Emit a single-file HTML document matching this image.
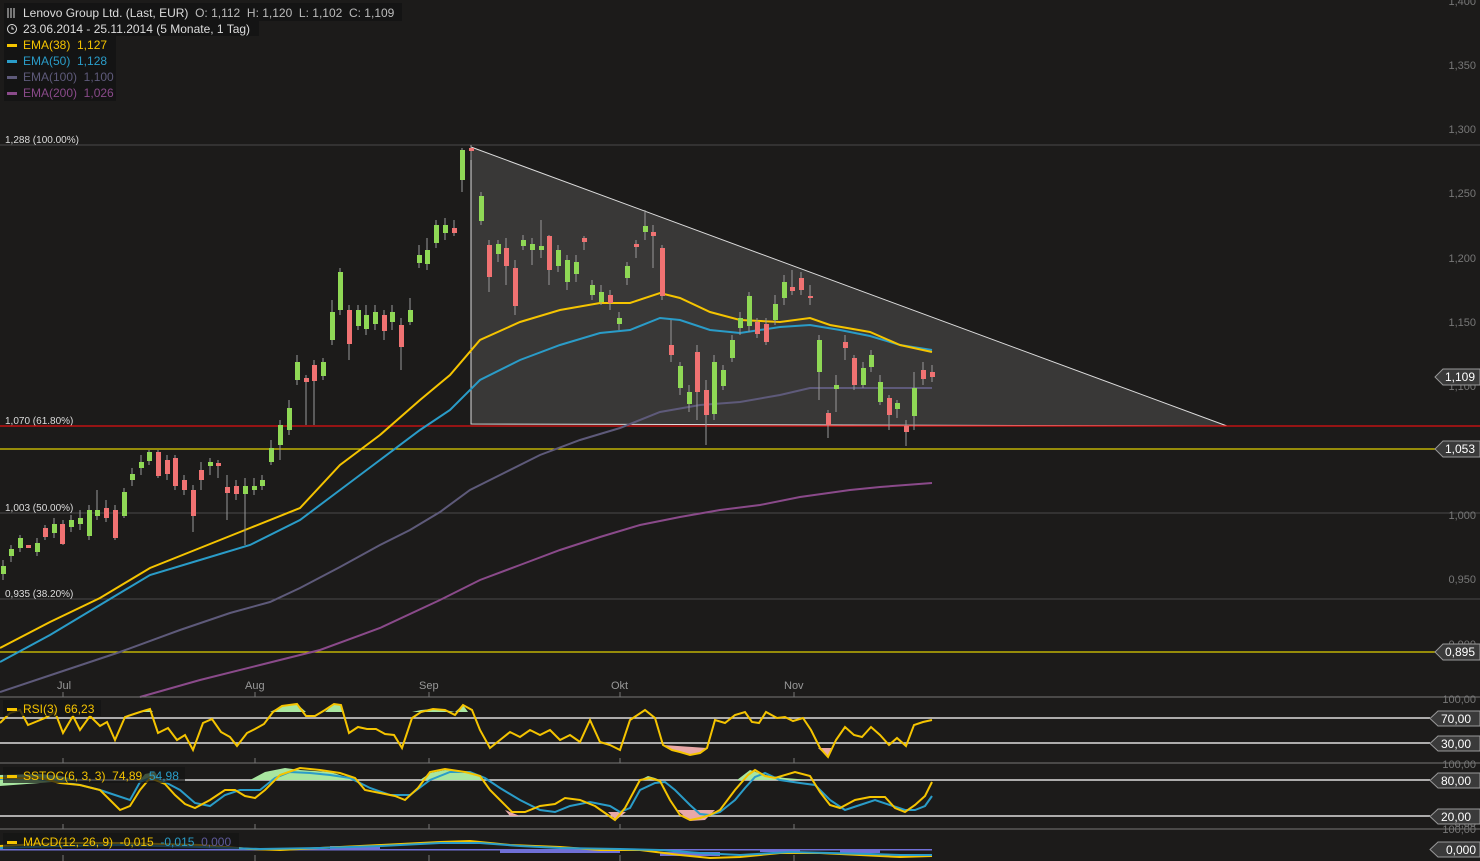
<!DOCTYPE html>
<html><head><meta charset="utf-8"><style>
body{margin:0;background:#1c1b1a;width:1480px;height:861px;overflow:hidden;font-family:"Liberation Sans",sans-serif}
svg{display:block}
text{font-family:"Liberation Sans",sans-serif;white-space:pre}
</style></head><body>
<svg width="1480" height="861" viewBox="0 0 1480 861" xml:space="preserve">
<rect width="1480" height="861" fill="#1c1b1a"/>
<line x1="0" y1="145" x2="1480" y2="145" stroke="#4a4a4a"/>
<line x1="0" y1="513" x2="1480" y2="513" stroke="#4a4a4a"/>
<line x1="0" y1="599" x2="1480" y2="599" stroke="#4a4a4a"/>
<text x="5" y="143" fill="#ddd" font-size="10">1,288 (100.00%)</text>
<text x="5" y="424" fill="#ddd" font-size="10">1,070 (61.80%)</text>
<text x="5" y="511" fill="#ddd" font-size="10">1,003 (50.00%)</text>
<text x="5" y="597" fill="#ddd" font-size="10">0,935 (38.20%)</text>
<polygon points="471,147 1227,426 471,424" fill="rgba(255,255,255,0.13)" stroke="#ddd" stroke-width="1"/>
<line x1="0" y1="426" x2="1480" y2="426" stroke="#e01010" stroke-width="1.3"/>
<line x1="0" y1="449" x2="1480" y2="449" stroke="#e0d000" stroke-width="1.2"/>
<line x1="0" y1="652" x2="1480" y2="652" stroke="#e0d000" stroke-width="1.2"/>
<polyline fill="none" stroke="#8a4a8a" stroke-width="2" points="140,697 200,680 260,665 320,650 380,628 440,600 480,580 520,565 560,550 600,537 640,525 680,517 720,510 760,505 800,497 850,490 880,487 932,483"/>
<polyline fill="none" stroke="#5e5a7a" stroke-width="2" points="0,692 60,672 120,652 180,630 230,613 270,602 300,588 340,567 380,545 410,530 440,512 470,490 500,475 540,455 580,440 620,428 660,412 700,405 740,402 780,395 810,388 850,388 900,388 932,388"/>
<polyline fill="none" stroke="#2a9cc8" stroke-width="2" points="0,662 50,635 100,605 150,575 200,560 250,545 300,520 340,490 380,460 420,430 450,410 480,380 520,360 560,345 600,333 630,330 660,318 680,320 710,330 740,333 780,327 810,325 840,330 870,336 900,345 932,350"/>
<polyline fill="none" stroke="#f5c400" stroke-width="2" points="0,648 50,622 100,598 150,568 200,548 250,528 300,508 340,465 380,435 420,400 450,375 480,340 520,322 560,310 600,303 630,303 660,293 680,298 710,312 740,320 780,322 810,318 830,325 870,332 900,345 932,352"/>
<g stroke="#999" stroke-width="1">
<line x1="3" y1="560" x2="3" y2="580"/><line x1="11" y1="545" x2="11" y2="562"/><line x1="20" y1="535" x2="20" y2="552"/><line x1="37" y1="538" x2="37" y2="556"/><line x1="45" y1="525" x2="45" y2="540"/><line x1="54" y1="518" x2="54" y2="538"/><line x1="63" y1="520" x2="63" y2="545"/><line x1="71" y1="515" x2="71" y2="532"/><line x1="80" y1="510" x2="80" y2="530"/><line x1="89" y1="505" x2="89" y2="540"/><line x1="97" y1="490" x2="97" y2="520"/><line x1="106" y1="500" x2="106" y2="522"/><line x1="115" y1="505" x2="115" y2="540"/><line x1="124" y1="488" x2="124" y2="518"/><line x1="132" y1="468" x2="132" y2="486"/><line x1="141" y1="455" x2="141" y2="475"/><line x1="149" y1="450" x2="149" y2="465"/><line x1="158" y1="450" x2="158" y2="478"/><line x1="167" y1="455" x2="167" y2="480"/><line x1="175" y1="455" x2="175" y2="490"/><line x1="184" y1="475" x2="184" y2="495"/><line x1="193" y1="485" x2="193" y2="532"/><line x1="201" y1="462" x2="201" y2="490"/><line x1="210" y1="458" x2="210" y2="475"/><line x1="218" y1="460" x2="218" y2="478"/><line x1="227" y1="475" x2="227" y2="520"/><line x1="236" y1="480" x2="236" y2="500"/><line x1="245" y1="478" x2="245" y2="545"/><line x1="254" y1="478" x2="254" y2="495"/><line x1="262" y1="475" x2="262" y2="490"/><line x1="271" y1="440" x2="271" y2="465"/><line x1="280" y1="420" x2="280" y2="460"/><line x1="289" y1="400" x2="289" y2="435"/><line x1="297" y1="355" x2="297" y2="385"/><line x1="306" y1="375" x2="306" y2="425"/><line x1="314" y1="360" x2="314" y2="425"/><line x1="323" y1="358" x2="323" y2="380"/><line x1="332" y1="300" x2="332" y2="345"/><line x1="340" y1="268" x2="340" y2="315"/><line x1="349" y1="305" x2="349" y2="360"/><line x1="358" y1="305" x2="358" y2="330"/><line x1="366" y1="305" x2="366" y2="335"/><line x1="375" y1="305" x2="375" y2="330"/><line x1="384" y1="310" x2="384" y2="340"/><line x1="392" y1="305" x2="392" y2="330"/><line x1="401" y1="318" x2="401" y2="370"/><line x1="410" y1="298" x2="410" y2="325"/><line x1="419" y1="245" x2="419" y2="268"/><line x1="427" y1="238" x2="427" y2="270"/><line x1="436" y1="220" x2="436" y2="248"/><line x1="445" y1="218" x2="445" y2="240"/><line x1="454" y1="220" x2="454" y2="236"/><line x1="462" y1="148" x2="462" y2="192"/><line x1="471" y1="145" x2="471" y2="160"/><line x1="481" y1="192" x2="481" y2="225"/><line x1="489" y1="240" x2="489" y2="292"/><line x1="498" y1="240" x2="498" y2="262"/><line x1="506" y1="238" x2="506" y2="285"/><line x1="515" y1="260" x2="515" y2="315"/><line x1="523" y1="235" x2="523" y2="250"/><line x1="532" y1="238" x2="532" y2="265"/><line x1="541" y1="220" x2="541" y2="258"/><line x1="549" y1="235" x2="549" y2="285"/><line x1="558" y1="245" x2="558" y2="272"/><line x1="567" y1="255" x2="567" y2="290"/><line x1="576" y1="255" x2="576" y2="282"/><line x1="584" y1="236" x2="584" y2="250"/><line x1="592" y1="280" x2="592" y2="300"/><line x1="601" y1="285" x2="601" y2="305"/><line x1="610" y1="290" x2="610" y2="310"/><line x1="619" y1="312" x2="619" y2="330"/><line x1="627" y1="262" x2="627" y2="285"/><line x1="636" y1="240" x2="636" y2="258"/><line x1="645" y1="210" x2="645" y2="240"/><line x1="653" y1="225" x2="653" y2="268"/><line x1="662" y1="245" x2="662" y2="300"/><line x1="671" y1="320" x2="671" y2="362"/><line x1="680" y1="362" x2="680" y2="395"/><line x1="689" y1="385" x2="689" y2="412"/><line x1="697" y1="345" x2="697" y2="420"/><line x1="706" y1="380" x2="706" y2="445"/><line x1="714" y1="355" x2="714" y2="420"/><line x1="723" y1="365" x2="723" y2="390"/><line x1="732" y1="335" x2="732" y2="362"/><line x1="740" y1="312" x2="740" y2="335"/><line x1="749" y1="292" x2="749" y2="332"/><line x1="757" y1="318" x2="757" y2="338"/><line x1="766" y1="318" x2="766" y2="345"/><line x1="775" y1="295" x2="775" y2="325"/><line x1="784" y1="275" x2="784" y2="305"/><line x1="792" y1="270" x2="792" y2="295"/><line x1="801" y1="272" x2="801" y2="295"/><line x1="810" y1="285" x2="810" y2="305"/><line x1="819" y1="335" x2="819" y2="400"/><line x1="828" y1="410" x2="828" y2="438"/><line x1="836" y1="375" x2="836" y2="412"/><line x1="845" y1="335" x2="845" y2="360"/><line x1="854" y1="355" x2="854" y2="390"/><line x1="863" y1="362" x2="863" y2="388"/><line x1="871" y1="350" x2="871" y2="372"/><line x1="880" y1="375" x2="880" y2="405"/><line x1="889" y1="395" x2="889" y2="430"/><line x1="897" y1="400" x2="897" y2="418"/><line x1="906" y1="420" x2="906" y2="446"/><line x1="914" y1="372" x2="914" y2="430"/><line x1="923" y1="362" x2="923" y2="385"/><line x1="932" y1="365" x2="932" y2="382"/>
</g>
<g fill="#8fd855">
<rect x="1" y="566" width="5" height="8"/><rect x="9" y="549" width="5" height="7"/><rect x="18" y="538" width="5" height="10"/><rect x="35" y="543" width="5" height="9"/><rect x="52" y="524" width="5" height="9"/><rect x="69" y="520" width="5" height="7"/><rect x="78" y="518" width="5" height="6"/><rect x="87" y="510" width="5" height="26"/><rect x="95" y="510" width="5" height="6"/><rect x="122" y="492" width="5" height="24"/><rect x="130" y="474" width="5" height="6"/><rect x="139" y="462" width="5" height="6"/><rect x="147" y="452" width="5" height="9"/><rect x="208" y="462" width="5" height="4"/><rect x="243" y="486" width="5" height="8"/><rect x="252" y="486" width="5" height="4"/><rect x="260" y="480" width="5" height="6"/><rect x="269" y="448" width="5" height="14"/><rect x="278" y="425" width="5" height="20"/><rect x="287" y="408" width="5" height="22"/><rect x="295" y="362" width="5" height="18"/><rect x="321" y="362" width="5" height="14"/><rect x="330" y="312" width="5" height="28"/><rect x="338" y="272" width="5" height="38"/><rect x="356" y="310" width="5" height="16"/><rect x="364" y="315" width="5" height="14"/><rect x="373" y="312" width="5" height="12"/><rect x="390" y="312" width="5" height="10"/><rect x="408" y="310" width="5" height="12"/><rect x="417" y="255" width="5" height="8"/><rect x="425" y="250" width="5" height="14"/><rect x="434" y="225" width="5" height="18"/><rect x="443" y="225" width="5" height="8"/><rect x="460" y="150" width="5" height="30"/><rect x="479" y="196" width="5" height="25"/><rect x="496" y="244" width="5" height="10"/><rect x="521" y="240" width="5" height="6"/><rect x="530" y="244" width="5" height="6"/><rect x="539" y="246" width="5" height="4"/><rect x="556" y="250" width="5" height="16"/><rect x="565" y="260" width="5" height="22"/><rect x="574" y="262" width="5" height="12"/><rect x="590" y="285" width="5" height="10"/><rect x="599" y="292" width="5" height="10"/><rect x="617" y="318" width="5" height="6"/><rect x="625" y="266" width="5" height="12"/><rect x="643" y="226" width="5" height="6"/><rect x="678" y="366" width="5" height="22"/><rect x="687" y="392" width="5" height="12"/><rect x="712" y="362" width="5" height="52"/><rect x="721" y="370" width="5" height="16"/><rect x="730" y="340" width="5" height="18"/><rect x="738" y="318" width="5" height="10"/><rect x="747" y="296" width="5" height="30"/><rect x="773" y="304" width="5" height="16"/><rect x="782" y="282" width="5" height="16"/><rect x="817" y="340" width="5" height="32"/><rect x="834" y="385" width="5" height="4"/><rect x="861" y="368" width="5" height="17"/><rect x="869" y="355" width="5" height="12"/><rect x="878" y="382" width="5" height="20"/><rect x="895" y="403" width="5" height="6"/><rect x="912" y="388" width="5" height="28"/>
</g>
<g fill="#f07272">
<rect x="26" y="545" width="5" height="3"/><rect x="43" y="528" width="5" height="9"/><rect x="60" y="524" width="5" height="20"/><rect x="104" y="508" width="5" height="10"/><rect x="113" y="510" width="5" height="28"/><rect x="156" y="452" width="5" height="24"/><rect x="165" y="460" width="5" height="14"/><rect x="173" y="458" width="5" height="28"/><rect x="182" y="480" width="5" height="10"/><rect x="191" y="490" width="5" height="26"/><rect x="199" y="470" width="5" height="10"/><rect x="216" y="463" width="5" height="3"/><rect x="225" y="487" width="5" height="6"/><rect x="234" y="486" width="5" height="8"/><rect x="304" y="378" width="5" height="4"/><rect x="312" y="365" width="5" height="16"/><rect x="347" y="310" width="5" height="34"/><rect x="382" y="315" width="5" height="16"/><rect x="399" y="325" width="5" height="22"/><rect x="452" y="228" width="5" height="5"/><rect x="469" y="148" width="5" height="3"/><rect x="487" y="245" width="5" height="32"/><rect x="504" y="248" width="5" height="18"/><rect x="513" y="268" width="5" height="38"/><rect x="547" y="236" width="5" height="34"/><rect x="582" y="238" width="5" height="4"/><rect x="608" y="295" width="5" height="8"/><rect x="634" y="244" width="5" height="3"/><rect x="651" y="232" width="5" height="4"/><rect x="660" y="248" width="5" height="48"/><rect x="669" y="345" width="5" height="10"/><rect x="695" y="352" width="5" height="40"/><rect x="704" y="390" width="5" height="25"/><rect x="755" y="322" width="5" height="12"/><rect x="764" y="324" width="5" height="18"/><rect x="790" y="287" width="5" height="4"/><rect x="799" y="278" width="5" height="12"/><rect x="808" y="296" width="5" height="2"/><rect x="826" y="413" width="5" height="12"/><rect x="843" y="342" width="5" height="6"/><rect x="852" y="358" width="5" height="27"/><rect x="887" y="398" width="5" height="17"/><rect x="904" y="426" width="5" height="6"/><rect x="921" y="370" width="5" height="9"/><rect x="930" y="372" width="5" height="5"/>
</g>
<rect x="4" y="3" width="398" height="18" fill="#141414"/>
<rect x="4" y="19" width="255" height="17" fill="#141414"/>
<rect x="4" y="36" width="112" height="65" fill="#141414"/>
<g stroke="#ddd" stroke-width="1" fill="none">
<line x1="8" y1="8" x2="8" y2="18"/><line x1="11" y1="8" x2="11" y2="18"/><line x1="14" y1="8" x2="14" y2="18"/>
<circle cx="12" cy="29" r="4.5"/><path d="M12 26.5V29H14"/>
</g>
<text x="23" y="17" fill="#ddd" font-size="12">Lenovo Group Ltd. (Last, EUR)  <tspan fill="#bbb">O: 1,112  H: 1,120  L: 1,102  C: 1,109</tspan></text>
<text x="23" y="33" fill="#ddd" font-size="12">23.06.2014 - 25.11.2014 (5 Monate, 1 Tag)</text>
<rect x="7" y="44" width="10" height="3" fill="#f5c400"/><text x="23" y="49" fill="#f5c400" font-size="12">EMA(38)  1,127</text>
<rect x="7" y="60" width="10" height="3" fill="#2a9cc8"/><text x="23" y="65" fill="#2a9cc8" font-size="12">EMA(50)  1,128</text>
<rect x="7" y="76" width="10" height="3" fill="#5e5a7a"/><text x="23" y="81" fill="#5e5a7a" font-size="12">EMA(100)  1,100</text>
<rect x="7" y="92" width="10" height="3" fill="#8a4a8a"/><text x="23" y="97" fill="#8a4a8a" font-size="12">EMA(200)  1,026</text>
<g fill="#777" font-size="11" text-anchor="end">
<text x="1476" y="5">1,400</text><text x="1476" y="69">1,350</text><text x="1476" y="133">1,300</text><text x="1476" y="197">1,250</text><text x="1476" y="262">1,200</text><text x="1476" y="326">1,150</text><text x="1476" y="390">1,100</text><text x="1476" y="519">1,000</text><text x="1476" y="583">0,950</text><text x="1476" y="648">0,900</text>
</g>
<g fill="#3a3a3a" stroke="#999">
<path d="M1443 369H1480V385H1443L1435 377Z"/><path d="M1443 441H1480V457H1443L1435 449Z"/><path d="M1443 644H1480V660H1443L1435 652Z"/>
</g>
<g fill="#fff" font-size="12"><text x="1445" y="381">1,109</text><text x="1445" y="453">1,053</text><text x="1445" y="656">0,895</text></g>
<g fill="#999" font-size="11"><text x="57" y="689">Jul</text><text x="245" y="689">Aug</text><text x="419" y="689">Sep</text><text x="611" y="689">Okt</text><text x="784" y="689">Nov</text></g>
<g stroke="#777"><line x1="0" y1="697" x2="1480" y2="697"/><line x1="0" y1="763" x2="1480" y2="763"/><line x1="0" y1="829" x2="1480" y2="829"/></g>
<g stroke="#777"><line x1="63" y1="692" x2="63" y2="697"/><line x1="255" y1="692" x2="255" y2="697"/><line x1="429" y1="692" x2="429" y2="697"/><line x1="620" y1="692" x2="620" y2="697"/><line x1="794" y1="692" x2="794" y2="697"/>
<line x1="63" y1="758" x2="63" y2="763"/><line x1="255" y1="758" x2="255" y2="763"/><line x1="429" y1="758" x2="429" y2="763"/><line x1="620" y1="758" x2="620" y2="763"/><line x1="794" y1="758" x2="794" y2="763"/>
<line x1="63" y1="824" x2="63" y2="829"/><line x1="255" y1="824" x2="255" y2="829"/><line x1="429" y1="824" x2="429" y2="829"/><line x1="620" y1="824" x2="620" y2="829"/><line x1="794" y1="824" x2="794" y2="829"/><line x1="63" y1="855" x2="63" y2="861"/><line x1="255" y1="855" x2="255" y2="861"/><line x1="429" y1="855" x2="429" y2="861"/><line x1="620" y1="855" x2="620" y2="861"/><line x1="794" y1="855" x2="794" y2="861"/></g>
<g stroke="#ddd" stroke-width="1.5"><line x1="0" y1="718" x2="1430" y2="718"/><line x1="0" y1="743" x2="1430" y2="743"/><line x1="0" y1="780" x2="1430" y2="780"/><line x1="0" y1="816" x2="1430" y2="816"/></g>
<g fill="#a8e6a0"><polygon points="270,712 282,706 297,704 306,712"/><polygon points="325,712 334,704 341,705 344,712"/><polygon points="412,712 421,710 433,709 445,710 455,712 463,705 468,712"/><polygon points="140,712 150,709 153,712"/></g>
<g fill="#e8a8a8"><polygon points="663,745 672,750 680,752 690,755 700,753 707,748"/><polygon points="818,748 828,757 832,748"/></g>
<polyline fill="none" stroke="#f5c400" stroke-width="2" points="0,723 10,713 20,710 28,725 45,718 55,712 63,733 73,716 80,730 90,716 100,726 107,722 115,740 125,717 140,712 150,709 158,733 168,728 177,740 185,735 193,750 203,723 212,719 221,732 230,737 237,746 247,733 255,729 264,724 273,712 282,706 297,704 306,716 315,716 325,710 334,704 341,705 349,733 358,727 367,729 376,729 385,734 394,735 402,748 412,718 421,712 433,709 445,710 455,715 463,705 472,710 480,730 490,748 500,740 510,732 520,737 530,730 540,735 550,730 560,740 570,735 580,742 590,720 600,742 610,745 620,750 630,720 645,710 655,718 663,745 672,750 680,752 690,755 700,753 707,748 715,720 725,723 735,715 745,712 752,722 759,723 766,712 777,718 785,717 793,721 803,718 811,730 820,748 828,757 836,740 845,727 854,735 862,737 871,727 880,735 889,745 897,738 906,746 914,725 923,722 932,720"/>
<g fill="#a8e6a0"><polygon points="0,786 0,775 40,774 60,776 80,780"/><polygon points="140,780 145,774 155,772 160,780"/><polygon points="250,780 265,772 285,768 300,770 330,772 350,778 355,780"/><polygon points="420,780 430,773 445,770 460,771 475,774 485,780"/><polygon points="640,780 648,776 655,778 660,780"/><polygon points="737,780 750,770 765,775 785,778 810,780"/></g>
<g fill="#e8a8a8"><polygon points="505,810 520,816 510,816"/><polygon points="608,812 616,820 626,812"/><polygon points="677,810 690,821 705,820 715,810"/></g>
<polyline fill="none" stroke="#2a9cc8" stroke-width="2" points="0,779 30,778 60,782 80,785 100,790 115,795 130,800 140,782 150,778 165,782 180,790 195,803 210,806 225,795 240,790 260,790 275,778 290,772 310,773 330,775 350,778 370,788 390,795 410,795 430,780 450,772 470,772 485,778 500,788 520,800 540,810 555,812 570,806 590,802 610,806 620,812 630,808 640,790 655,783 665,782 675,790 690,805 700,814 710,815 720,812 735,800 745,788 755,777 765,773 780,780 800,783 815,785 830,800 845,810 860,805 875,800 890,805 905,810 915,810 925,806 932,796"/>
<polyline fill="none" stroke="#f5c400" stroke-width="2" points="0,778 40,778 60,783 80,785 100,790 110,800 120,810 130,806 140,790 150,778 165,784 175,795 185,804 195,808 210,800 225,790 235,790 245,796 255,798 265,790 280,775 300,768 320,770 340,773 355,778 365,790 380,793 395,796 405,800 418,788 430,772 445,769 465,772 480,776 490,790 500,800 512,812 525,812 540,806 555,804 565,798 580,800 595,806 605,813 615,820 625,808 640,780 650,778 660,781 670,800 680,815 690,820 700,818 710,815 720,810 735,790 748,775 755,770 765,776 775,778 795,772 810,776 820,792 830,805 840,808 855,800 870,797 885,797 895,808 905,812 915,805 925,796 932,782"/>
<g fill="#7070d8"><rect x="330" y="846" width="50" height="4"/><rect x="500" y="850" width="120" height="3"/><rect x="660" y="852" width="60" height="4"/><rect x="760" y="849" width="40" height="3"/><rect x="840" y="850" width="40" height="3"/><rect x="0" y="849" width="932" height="1.5"/></g>
<polyline fill="none" stroke="#f5c400" stroke-width="2" points="0,846 60,843 120,843 200,845 250,849 280,850 320,848 380,845 440,842 470,841 510,845 560,847 600,850 640,850 680,855 710,858 740,857 780,853 820,853 860,855 900,857 932,856"/>
<polyline fill="none" stroke="#2a9cc8" stroke-width="2" points="0,848 60,846 120,845 200,847 260,849 320,848 380,846 440,843 480,843 520,846 560,848 620,849 660,850 700,853 740,855 790,852 830,853 870,854 900,855 932,855"/>
<rect x="3" y="700" width="98" height="16" fill="#141414" opacity="0.8"/>
<rect x="7" y="708" width="10" height="3" fill="#f5c400"/><text x="23" y="713" fill="#f5c400" font-size="12">RSI(3)  66,23</text>
<rect x="3" y="767" width="182" height="16" fill="#141414" opacity="0.7"/>
<rect x="7" y="775" width="10" height="3" fill="#f5c400"/><text x="23" y="780" fill="#f5c400" font-size="12">SSTOC(6, 3, 3)  74,89  <tspan fill="#2a9cc8">54,98</tspan></text>
<rect x="3" y="833" width="236" height="16" fill="#141414" opacity="0.7"/>
<rect x="7" y="841" width="10" height="3" fill="#f5c400"/><text x="23" y="846" fill="#f5c400" font-size="12">MACD(12, 26, 9)  -0,015  <tspan fill="#2a9cc8">-0,015</tspan>  <tspan fill="#5e5a9a">0,000</tspan></text>
<g fill="#777" font-size="11" text-anchor="end"><text x="1476" y="703">100,00</text><text x="1476" y="768">100,00</text><text x="1476" y="827">0,00</text><text x="1476" y="833">100,00</text></g>
<g fill="#3a3a3a" stroke="#999">
<path d="M1438 711H1480V726H1438L1430 718.5Z"/><path d="M1438 736H1480V751H1438L1430 743.5Z"/><path d="M1438 773H1480V788H1438L1430 780.5Z"/><path d="M1438 809H1480V824H1438L1430 816.5Z"/><path d="M1438 842H1480V857H1438L1430 849.5Z"/>
</g>
<g fill="#fff" font-size="12"><text x="1441" y="723">70,00</text><text x="1441" y="748">30,00</text><text x="1441" y="785">80,00</text><text x="1441" y="821">20,00</text><text x="1446" y="854">0,000</text></g>
</svg>
</body></html>
